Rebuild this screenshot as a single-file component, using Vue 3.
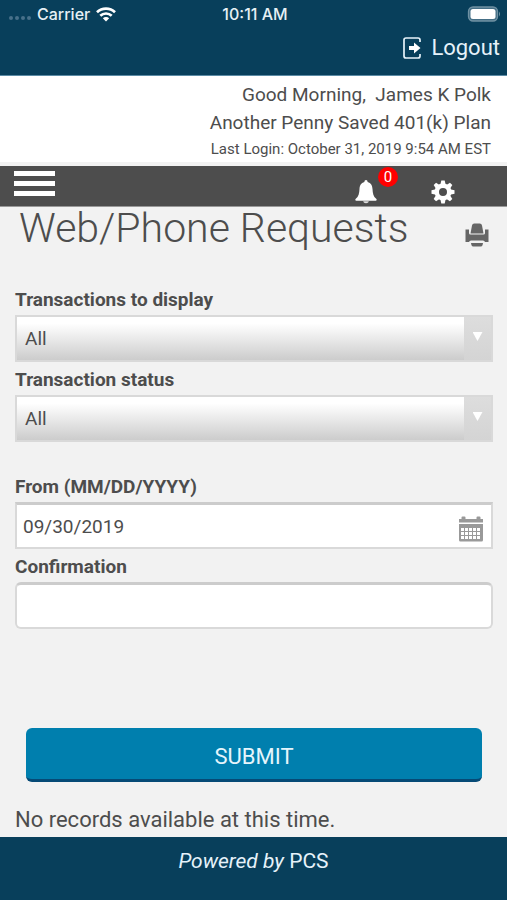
<script setup>
import { ref } from 'vue'

const display = ref('All')
const status = ref('All')
const fromDate = ref('09/30/2019')
const confirmation = ref('')
const calendarX = [3, 7, 11, 15, 19]
const teeth = [0, 45, 90, 135, 180, 225, 270, 315]
</script>

<template>
  <div class="page">
    <header class="top">
      <div class="statusbar">
        <div class="carrier">
          <span class="dots"><i></i><i></i><i></i><i></i></span>
          <span>Carrier</span>
          <svg class="wifi" viewBox="0 0 20 15" width="20" height="15" aria-hidden="true">
            <g fill="none" stroke="#fff" stroke-width="2.7">
              <path d="M1 5.3C6 .5 14 .5 19 5.3" />
              <path d="M4.3 8.8c3.2-3.1 8.2-3.1 11.4 0" />
            </g>
            <path d="M6.8 11.2c1.8-1.7 4.600-1.700 6.400 0L10 14.500z" fill="#fff" />
          </svg>
        </div>
        <span class="time">10:11 AM</span>
        <svg class="battery" viewBox="0 0 34 16" width="34" height="16" aria-hidden="true">
          <rect x="1.500" y="1" width="29" height="14" rx="4.500" fill="#456f86" stroke="#6f91a3" stroke-width="1.300" />
          <rect x="3.500" y="3" width="25" height="10" rx="2.500" fill="#fff" />
          <path d="M32 5.500q2 2.500 0 5z" fill="#6f91a3" />
        </svg>
      </div>
      <a class="logout" href="#logout">
        <svg viewBox="0 0 20 24" width="20" height="24" aria-hidden="true">
          <path d="M18 6V4a2 2 0 0 0-2-2H4a2 2 0 0 0-2 2v16a2 2 0 0 0 2 2h12a2 2 0 0 0 2-2v-2" fill="none" stroke="#e6f2fa" stroke-width="1.700" />
          <path d="M7 10h5V6.500L18.500 12 12 17.500V14H7z" fill="#fff" />
        </svg>
        <span>Logout</span>
      </a>
    </header>

    <section class="greeting">
      <p>Good Morning,&nbsp; James K Polk</p>
      <p>Another Penny Saved 401(k) Plan</p>
      <p class="last">Last Login: October 31, 2019 9:54 AM EST</p>
    </section>

    <nav class="nav">
      <button class="menu" type="button" aria-label="Menu"><i></i><i></i><i></i></button>
      <div class="actions">
        <button class="bell" type="button" aria-label="Notifications">
          <svg viewBox="0 0 22 24" width="22" height="24" aria-hidden="true">
            <path d="M11 0c1 0 1.600.8 1.600 1.900 3.400.8 4.700 3.500 4.900 7.100.2 4.500.9 7.500 3.700 9.700.8.700.6 2.100-.5 2.100H1.300c-1.100 0-1.300-1.400-.5-2.100C3.600 16.500 4.300 13.500 4.500 9c.2-3.600 1.500-6.300 4.900-7.100C9.400.8 10 0 11 0z" fill="#fff" />
            <path d="M8.200 21.300h5.600c-.2 1.300-1.300 2-2.800 2s-2.600-.7-2.800-2z" fill="#ddd" />
          </svg>
          <span class="badge">0</span>
        </button>
        <button class="gear" type="button" aria-label="Settings">
          <svg viewBox="0 0 24 24" width="24" height="24" aria-hidden="true">
            <g fill="#fff">
              <path v-for="a in teeth" :key="a" d="M9.300 5L10.300.5h3.400L14.700 5z" :transform="`rotate(${a} 12 12)`" />
            </g>
            <circle cx="12" cy="12" r="6.200" fill="none" stroke="#fff" stroke-width="4.400" />
          </svg>
        </button>
      </div>
    </nav>

    <main class="content">
      <div class="heading">
        <h1>Web/Phone Requests</h1>
        <button class="print" type="button" aria-label="Print">
          <svg viewBox="0 0 24 24" width="24" height="24" aria-hidden="true">
            <g fill="#666">
              <path d="M5.500 10.500L7 2.500Q7.300.5 9.300.5h5.400q2 0 2.300 2l1.500 8z" />
              <path d="M.5 6.500H4v3.500q0 1.500 1.500 1.500h13q1.500 0 1.500-1.500V6.500h3.500v12.500H20q-.5-1.500-2-1.500H6q-1.500 0-2 1.500H.500z" />
              <path d="M6 20h12q-.5 3.500-2 3.500H8Q6.500 23.500 6 20z" />
            </g>
          </svg>
        </button>
      </div>

      <form @submit.prevent>
        <div class="group selects">
          <div class="field">
            <label for="display">Transactions to display</label>
            <div class="select">
              <select id="display" v-model="display"><option>All</option></select>
              <span class="arrow"><i></i></span>
            </div>
          </div>
          <div class="field">
            <label for="status">Transaction status</label>
            <div class="select">
              <select id="status" v-model="status"><option>All</option></select>
              <span class="arrow"><i></i></span>
            </div>
          </div>
        </div>

        <div class="group">
          <div class="field">
            <label for="from">From (MM/DD/YYYY)</label>
            <div class="date">
              <input id="from" v-model="fromDate" type="text" />
              <button class="calendar" type="button" aria-label="Choose date">
                <svg viewBox="0 0 26 26" width="26" height="26" aria-hidden="true">
                  <path d="M1 3h2.500V1.500q0-1 1-1h2q1 0 1 1V3h11V1.500q0-1 1-1h2q1 0 1 1V3H25v3.500H1z" fill="#999" />
                  <path d="M1 8h24v16q0 1.500-1.500 1.500h-21Q1 25.500 1 24z" fill="#999" />
                  <g fill="#fff">
                    <template v-for="x in calendarX" :key="x">
                      <rect :x="x" y="12" width="3" height="3" />
                      <rect :x="x" y="16" width="3" height="3" />
                      <rect :x="x" y="20" width="3" height="3" />
                    </template>
                  </g>
                </svg>
              </button>
            </div>
          </div>
          <div class="field">
            <label for="confirmation">Confirmation</label>
            <input id="confirmation" v-model="confirmation" class="rounded" type="text" />
          </div>
        </div>

        <button class="submit" type="submit">SUBMIT</button>
      </form>

      <p class="empty">No records available at this time.</p>
    </main>

    <footer class="footer"><p><em>Powered by</em> PCS</p></footer>
  </div>
</template>

<style>
body {
  margin: 0;
  background: #f2f2f2;
}
</style>

<style scoped>
* {
  box-sizing: border-box;
}

.page {
  display: flex;
  flex-direction: column;
  min-height: 100vh;
  background: #f2f2f2;
  color: #4d4d4d;
  font-family: Roboto, "Liberation Sans", sans-serif;
  font-size: 19px;
}

p,
h1 {
  margin: 0;
}

button {
  padding: 0;
  border: 0;
  background: none;
  font-family: inherit;
  cursor: pointer;
}

svg {
  display: block;
}

.top {
  background: #083f5b;
  border-bottom: 1px solid #5b8ba5;
}

.statusbar {
  display: grid;
  grid-template-columns: 1fr auto 1fr;
  align-items: center;
  height: 28px;
  padding: 0 6px 0 9px;
  color: #e6f0f5;
  font-family: Inter, Roboto, sans-serif;
  font-size: 16px;
  font-weight: 500;
}

.carrier {
  display: flex;
  align-items: center;
  gap: 6px;
}

.dots {
  display: flex;
  gap: 2px;
  padding-top: 8px;
}

.dots i {
  width: 4px;
  height: 4px;
  border-radius: 50%;
  background: #47718a;
}

.battery {
  justify-self: end;
}

.logout {
  display: flex;
  justify-content: flex-end;
  align-items: center;
  gap: 9px;
  height: 47px;
  padding: 0 7px 8px;
  color: #e6f2fa;
  font-size: 22px;
  text-decoration: none;
}

.greeting {
  padding: 5px 16px 1px;
  border-bottom: 4px solid #f2f2f2;
  background: #fff;
  text-align: right;
  line-height: 28px;
}

.greeting .last {
  font-size: 15px;
  line-height: 24px;
}

.nav {
  display: flex;
  justify-content: space-between;
  height: 41px;
  padding: 0 52px 0 14px;
  background: #4d4d4d;
  border-bottom: 1px solid #999;
}

.menu {
  display: flex;
  flex-direction: column;
  gap: 5px;
  align-self: flex-start;
  padding-top: 5px;
}

.menu i {
  width: 41px;
  height: 5px;
  background: #fff;
}

.actions {
  display: flex;
  gap: 54px;
  align-items: flex-end;
  padding-bottom: 2px;
}

.bell {
  position: relative;
}

.badge {
  position: absolute;
  top: -13px;
  left: 23px;
  width: 20px;
  height: 20px;
  border-radius: 50%;
  background: #f00;
  color: #fff;
  font-size: 15px;
  line-height: 20px;
}

.content {
  flex: 1;
  padding: 0 14px 0 15px;
}

.heading {
  display: flex;
  justify-content: space-between;
  height: 78px;
  padding: 0 4px;
}

h1 {
  font-size: 41px;
  font-weight: 300;
  line-height: 42px;
}

.print {
  align-self: flex-start;
  padding-top: 16px;
}

form {
  display: flex;
  flex-direction: column;
}

.group {
  display: flex;
  flex-direction: column;
  gap: 3px;
}

.selects {
  margin-bottom: 30px;
}

label {
  display: block;
  font-size: 19px;
  font-weight: 700;
  line-height: 30px;
}

.select {
  position: relative;
}

select,
input {
  display: block;
  width: 100%;
  height: 47px;
  border: 2px solid #d9d9d9;
  border-radius: 0;
  appearance: none;
  color: #4d4d4d;
  font-family: inherit;
  font-size: 19px;
}

select {
  padding: 0 8px;
  background: linear-gradient(#fff 15%, #ccc);
}

input {
  padding: 0 6px;
  border-top: 3px solid #ccc;
  background: #fff;
}

.arrow {
  position: absolute;
  top: 2px;
  right: 2px;
  bottom: 2px;
  display: flex;
  justify-content: center;
  width: 27px;
  padding-top: 15px;
  background: linear-gradient(#ddd, #d4d4d4);
  pointer-events: none;
}

.arrow i {
  width: 10px;
  height: 9px;
  background: #fff;
  clip-path: polygon(0 0, 100% 0, 50% 100%);
}

.date {
  position: relative;
}

.calendar {
  position: absolute;
  top: 14px;
  right: 9px;
}

.rounded {
  border-radius: 6px;
}

.submit {
  height: 54px;
  margin: 99px 11px 0;
  padding-top: 5px;
  border-bottom: 3px solid #064a76;
  border-radius: 6px;
  background: #007fae;
  color: #e6f5fc;
  font-size: 22px;
}

.empty {
  padding-top: 22px;
  font-size: 22px;
  line-height: 32px;
}

.footer {
  height: 63px;
  padding-top: 8px;
  background: #083f5b;
  color: #e6f2fa;
  font-size: 21px;
  line-height: 32px;
  text-align: center;
}
</style>
